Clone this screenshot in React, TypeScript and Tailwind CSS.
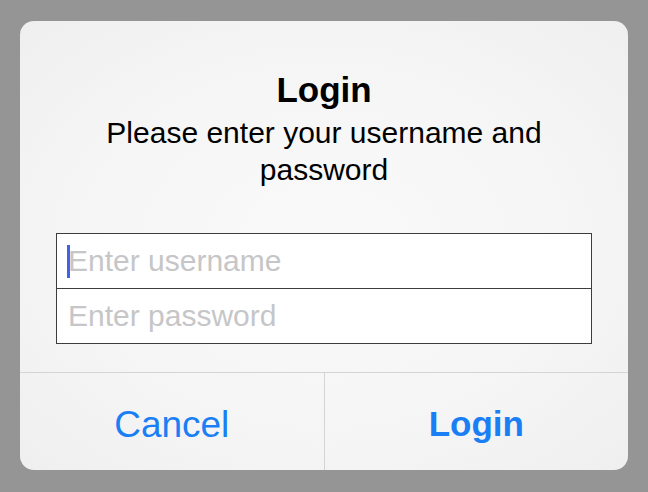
import React from "react";

export default function App() {
  return (
    <div className="w-[648px] h-[492px] bg-[#959595] pt-[21px] pl-[20px] font-['Liberation_Sans',Arial,sans-serif]">
      <div className="w-[608px] h-[449px] rounded-[14px] overflow-hidden flex flex-col bg-[radial-gradient(ellipse_at_center,#fafafa_0%,#f5f5f5_60%,#efefef_100%)]">
        <div className="flex flex-col items-center pt-[49px]">
          <div className="text-[35px] leading-[40px] font-bold text-black">Login</div>
          <div className="mt-[4px] text-[30px] leading-[37px] text-black text-center w-[480px]">
            Please enter your username and password
          </div>
        </div>
        <div className="mt-[45px] mx-[36px] border border-[#3d3d3d] bg-white flex flex-col">
          <div className="relative h-[54px]">
            <input
              className="w-full h-full pl-[11px] text-[30px] outline-none bg-white placeholder:text-[#c6c6c8] text-black"
              placeholder="Enter username"
              readOnly
            />
            <span className="absolute left-[10px] top-[11px] w-[3px] h-[33px] bg-[#3f62e6]" />
          </div>
          <div className="h-px bg-[#3d3d3d]" />
          <div className="h-[54px]">
            <input
              className="w-full h-full pl-[11px] text-[30px] outline-none bg-white placeholder:text-[#c6c6c8] text-black"
              placeholder="Enter password"
              readOnly
            />
          </div>
        </div>
        <div className="mt-[28px] h-px bg-[#d4d4d4]" />
        <div className="flex flex-1">
          <div className="flex-1 flex items-center justify-center pt-[6px] text-[37px] text-[#1a7ff5]">
            Cancel
          </div>
          <div className="w-px bg-[#d4d4d4]" />
          <div className="flex-1 flex items-center justify-center pt-[6px] text-[35px] font-bold text-[#1a7ff5]">
            Login
          </div>
        </div>
      </div>
    </div>
  );
}
